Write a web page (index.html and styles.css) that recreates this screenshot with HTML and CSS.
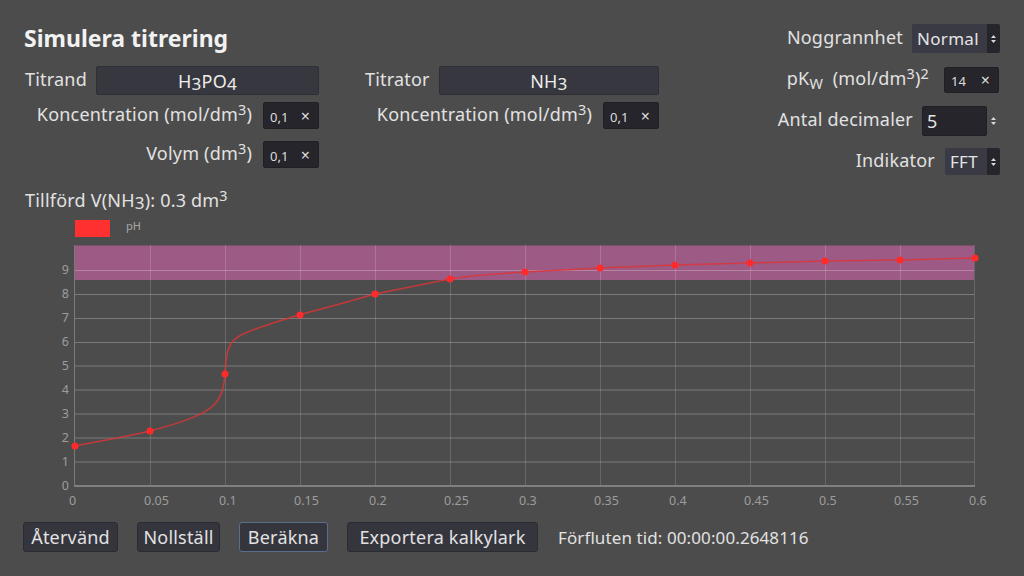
FILE: index.html
```html
<!DOCTYPE html>
<html lang="sv">
<head>
<meta charset="utf-8">
<title>Simulera titrering</title>
<link rel="stylesheet" href="styles.css">
</head>
<body>
<div class="app">
  <header class="top">
    <div class="left">
      <h1 class="title">Simulera titrering</h1>
      <div class="groups">
        <div class="group">
          <div class="row row-main"><span class="lbl">Titrand</span><button class="pick">H<span class="sub">3</span>PO<span class="sub">4</span></button></div>
          <div class="row row-num"><span class="lbl">Koncentration (mol/dm<sup>3</sup>)</span><div class="num"><span>0,1</span><span class="x">×</span></div></div>
          <div class="row row-num r3"><span class="lbl">Volym (dm<sup>3</sup>)</span><div class="num"><span>0,1</span><span class="x">×</span></div></div>
        </div>
        <div class="group">
          <div class="row row-main"><span class="lbl">Titrator</span><button class="pick">NH<span class="sub">3</span></button></div>
          <div class="row row-num"><span class="lbl">Koncentration (mol/dm<sup>3</sup>)</span><div class="num"><span>0,1</span><span class="x">×</span></div></div>
        </div>
      </div>
    </div>
    <div class="right">
      <div class="rrow rr1"><span class="lbl">Noggrannhet</span><div class="select w-norm"><span class="sel-val">Normal</span><span class="sel-arr"><svg width="7" height="10" viewBox="0 0 7 10"><path d="M3.5 1 L6 4 H1 Z M3.5 9 L6 6 H1 Z" fill="#d8d8d8"/></svg></span></div></div>
      <div class="rrow rr2"><span class="lbl">pK<span class="subw">W</span>&nbsp; (mol/dm<sup>3</sup>)<sup>2</sup></span><div class="num num-k"><span>14</span><span class="x">×</span></div></div>
      <div class="rrow rr3"><span class="lbl">Antal decimaler</span><div class="spin"><span class="spin-val">5</span></div><span class="spin-arr"><svg width="7" height="10" viewBox="0 0 7 10"><path d="M3.5 1 L6 4 H1 Z M3.5 9 L6 6 H1 Z" fill="#d8d8d8"/></svg></span></div>
      <div class="rrow rr4"><span class="lbl">Indikator</span><div class="select w-fft"><span class="sel-val">FFT</span><span class="sel-arr"><svg width="7" height="10" viewBox="0 0 7 10"><path d="M3.5 1 L6 4 H1 Z M3.5 9 L6 6 H1 Z" fill="#d8d8d8"/></svg></span></div></div>
    </div>
  </header>

  <div class="added">Tillförd V(NH<span class="sub">3</span>): 0.3 dm<sup>3</sup></div>

  <svg class="chart" width="1024" height="300" viewBox="0 212 1024 300">
    <rect x="75" y="220" width="35" height="17" fill="#ff3030"/>
    <text x="126" y="230" class="legend">pH</text>

    <rect x="75" y="245.5" width="900" height="34.5" fill="#9c5a85"/>

    <g stroke="rgba(255,255,255,0.16)" stroke-width="1">
      <line x1="150.5" y1="245" x2="150.5" y2="486"/>
      <line x1="225.5" y1="245" x2="225.5" y2="486"/>
      <line x1="300.5" y1="245" x2="300.5" y2="486"/>
      <line x1="375.5" y1="245" x2="375.5" y2="486"/>
      <line x1="450.5" y1="245" x2="450.5" y2="486"/>
      <line x1="525.5" y1="245" x2="525.5" y2="486"/>
      <line x1="600.5" y1="245" x2="600.5" y2="486"/>
      <line x1="675.5" y1="245" x2="675.5" y2="486"/>
      <line x1="750.5" y1="245" x2="750.5" y2="486"/>
      <line x1="825.5" y1="245" x2="825.5" y2="486"/>
      <line x1="900.5" y1="245" x2="900.5" y2="486"/>
    </g>
    <g stroke="rgba(255,255,255,0.26)" stroke-width="1">
      <line x1="75" y1="462" x2="975" y2="462"/>
      <line x1="75" y1="438" x2="975" y2="438"/>
      <line x1="75" y1="414" x2="975" y2="414"/>
      <line x1="75" y1="390" x2="975" y2="390"/>
      <line x1="75" y1="366" x2="975" y2="366"/>
      <line x1="75" y1="342.5" x2="975" y2="342.5"/>
      <line x1="75" y1="318.5" x2="975" y2="318.5"/>
      <line x1="75" y1="294.5" x2="975" y2="294.5"/>
      <line x1="75" y1="270.5" x2="975" y2="270.5"/>
    </g>
    <line x1="74.5" y1="245" x2="74.5" y2="487" stroke="#7a7a7a" stroke-width="1"/>
    <line x1="974.5" y1="245" x2="974.5" y2="487" stroke="#666" stroke-width="1"/>
    <line x1="74" y1="486" x2="975" y2="486" stroke="#808080" stroke-width="2"/>

    <g class="ylab" text-anchor="end">
      <text x="69" y="490">0</text>
      <text x="69" y="466">1</text>
      <text x="69" y="442">2</text>
      <text x="69" y="418">3</text>
      <text x="69" y="394">4</text>
      <text x="69" y="370">5</text>
      <text x="69" y="346">6</text>
      <text x="69" y="322">7</text>
      <text x="69" y="298">8</text>
      <text x="69" y="274">9</text>
    </g>
    <g class="xlab">
      <text x="69" y="505">0</text>
      <text x="144" y="505">0.05</text>
      <text x="219" y="505">0.1</text>
      <text x="294" y="505">0.15</text>
      <text x="369" y="505">0.2</text>
      <text x="444" y="505">0.25</text>
      <text x="519" y="505">0.3</text>
      <text x="594" y="505">0.35</text>
      <text x="669" y="505">0.4</text>
      <text x="744" y="505">0.45</text>
      <text x="819" y="505">0.5</text>
      <text x="894" y="505">0.55</text>
      <text x="969" y="505">0.6</text>
    </g>

    <path fill="none" stroke="rgba(222,52,52,0.82)" stroke-width="1.6"
      d="M75,446 C105,440 135,435 150,431 C180,423 205,415 215,404 C222,396 224.5,385 225,374 C226,358 227,348 233,341 C242,332 262,327 280,320.7 L300,314.7 C325,308 355,300 375,294 C400,289 425,284 450,279 C475,275 500,273.5 525,272 L600,268 L675,265 L750,263 L825,261 L900,260 L975,258"/>
    <g fill="#ff2b2b">
      <circle cx="75" cy="446" r="3.5"/>
      <circle cx="150" cy="431" r="3.5"/>
      <circle cx="225" cy="374" r="3.5"/>
      <circle cx="300" cy="315" r="3.5"/>
      <circle cx="375" cy="294" r="3.5"/>
      <circle cx="450" cy="279" r="3.5"/>
      <circle cx="525" cy="272" r="3.5"/>
      <circle cx="600" cy="268" r="3.5"/>
      <circle cx="675" cy="265" r="3.5"/>
      <circle cx="750" cy="263" r="3.5"/>
      <circle cx="825" cy="261" r="3.5"/>
      <circle cx="900" cy="260" r="3.5"/>
      <circle cx="975" cy="258" r="3.5"/>
    </g>
  </svg>

  <footer class="bar">
    <button class="btn btn-back">Återvänd</button>
    <button class="btn btn-reset">Nollställ</button>
    <button class="btn btn-calc focus">Beräkna</button>
    <button class="btn btn-export">Exportera kalkylark</button>
    <span class="elapsed">Förfluten tid: 00:00:00.2648116</span>
  </footer>
</div>
</body>
</html>
```

FILE: styles.css
```css
* { box-sizing: border-box; }

html, body {
  margin: 0;
  padding: 0;
  background: #4c4c4c;
}

body {
  width: 1024px;
  height: 576px;
  overflow: hidden;
  font-family: "Noto Sans", "Open Sans", sans-serif;
  color: #e2e2e2;
  font-size: 18px;
  letter-spacing: 0.2px;
}

.app {
  width: 1024px;
  height: 576px;
}

sup {
  font-size: 0.8em;
  line-height: 0;
  vertical-align: 0.45em;
}

.sub {
  font-size: 0.95em;
  vertical-align: -0.12em;
  line-height: 0;
}

.subw {
  font-size: 0.8em;
  vertical-align: -0.3em;
  line-height: 0;
}

/* ---------- header ---------- */
.top {
  display: flex;
  justify-content: space-between;
  align-items: flex-start;
  height: 176px;
  padding: 24px 24px 0 24px;
}

.title {
  margin: 0;
  height: 32px;
  line-height: 28px;
  font-size: 23px;
  font-weight: 700;
  letter-spacing: 0;
  color: #f2f2f2;
}

.groups {
  display: flex;
  gap: 45px;
  margin-top: 10px;
}

.group {
  width: 295px;
  display: flex;
  flex-direction: column;
}

.row {
  display: flex;
  align-items: center;
}

.row-main {
  height: 29px;
  gap: 9px;
  padding-left: 1px;
}

.row-num {
  height: 27px;
  justify-content: flex-end;
  gap: 11px;
  margin-top: 7px;
}

.row-num.r3 { margin-top: 12px; }

.lbl {
  white-space: nowrap;
  line-height: 20px;
  position: relative;
  top: -2px;
}

.pick {
  flex: 1;
  height: 29px;
  border: 1px solid #2e2e35;
  border-radius: 2px;
  background: #37373f;
  color: #ececec;
  font-family: inherit;
  font-size: 18px;
  letter-spacing: 0.2px;
  padding: 0;
}

.num {
  width: 56px;
  height: 27px;
  display: flex;
  align-items: center;
  justify-content: space-between;
  padding: 2px 8px 0 6px;
  background: #25252b;
  border: 1px solid #1f1f24;
  border-radius: 2px;
  font-size: 13px;
  letter-spacing: 0;
  color: #dcdcdc;
}

.num .x {
  font-size: 16px;
  margin-top: -2px;
}

/* ---------- right column ---------- */
.right {
  display: flex;
  flex-direction: column;
  align-items: flex-end;
}

.rrow {
  display: flex;
  align-items: center;
  gap: 9px;
}

.rr1 { height: 29px; }
.rr2 { height: 26px; margin-top: 14px; margin-right: 1px; gap: 15px; }
.rr3 { height: 30px; margin-top: 13px; gap: 0; }
.rr4 { height: 27px; margin-top: 12px; gap: 10px; }

.rr3 .lbl { margin-right: 9px; }

.select {
  display: flex;
  height: 100%;
  border-radius: 2px;
  overflow: hidden;
}

.sel-val {
  flex: 1;
  display: flex;
  align-items: center;
  padding-left: 5px;
  background: #3a3a45;
  color: #e4e4e4;
  font-size: 17px;
  letter-spacing: 0.3px;
}

.sel-arr, .spin-arr {
  width: 13px;
  display: flex;
  align-items: center;
  justify-content: center;
}

.sel-arr {
  background: #25252b;
}

.w-norm { width: 88px; }
.w-fft { width: 55px; }

.num-k {
  width: 55px;
  height: 26px;
}

.spin {
  width: 65px;
  height: 30px;
  display: flex;
  align-items: center;
  padding-left: 4px;
  background: #25252b;
  border: 1px solid #1f1f24;
  border-radius: 2px;
  color: #e4e4e4;
}

.spin-arr { height: 30px; }

/* ---------- added volume ---------- */
.added {
  margin-top: 12px;
  padding-left: 25px;
  height: 24px;
  line-height: 24px;
}

/* ---------- chart ---------- */
.chart {
  display: block;
}

.legend {
  font-family: "Noto Sans", sans-serif;
  font-size: 11px;
  fill: #a8a8a8;
  letter-spacing: 0;
}

.ylab text, .xlab text {
  font-family: "Noto Sans", sans-serif;
  font-size: 12.5px;
  fill: #9c9c9c;
  letter-spacing: 0;
}

/* ---------- footer ---------- */
.bar {
  display: flex;
  align-items: center;
  gap: 19px;
  padding: 10px 0 0 23px;
}

.btn {
  height: 30px;
  padding: 0;
  background: #35353e;
  border: 1px solid #2b2b32;
  border-radius: 3px;
  color: #e2e2e2;
  font-family: inherit;
  font-size: 18px;
  letter-spacing: 0.2px;
  text-align: center;
}

.btn-back { width: 95px; }
.btn-reset { width: 83px; }
.btn-calc { width: 89px; }
.btn-export { width: 191px; }

.btn.focus {
  border-color: #5a6d8c;
}

.elapsed {
  margin-left: 1px;
  font-size: 17px;
  letter-spacing: 0.1px;
}
```
